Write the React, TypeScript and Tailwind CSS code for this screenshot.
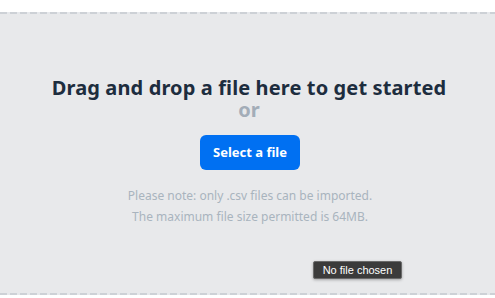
import React from 'react';

export default function App() {
  return (
    <div className="relative h-[298px] w-[495px] overflow-hidden bg-white pt-[12px] font-['Noto_Sans',sans-serif]">
      {/* top dashed line */}
      <div className="h-[2px] w-full bg-[repeating-linear-gradient(90deg,#cdd1d6_0_7px,#e6e8eb_7px_10px)]" />

      {/* drop zone */}
      <div className="flex h-[279px] flex-col items-center bg-[#e8e9eb] pl-[3px] pt-[62px]">
        <h1 className="text-[20px] font-bold leading-[24px] tracking-[0.12px] text-[#1d2d3e]">
          Drag and drop a file here to get started
        </h1>
        <div className="text-[20px] font-bold leading-[20px] text-[#a3adb8]">or</div>
        <button className="ml-[2px] mt-[15px] h-[35px] w-[100px] rounded-[6px] bg-[#0070f2] text-[13px] font-bold text-white">
          Select a file
        </button>
        <div className="ml-[2px] mt-[15px] text-center text-[12px] leading-[21px] text-[#a9b4be]">
          <p>Please note: only .csv files can be imported.</p>
          <p>The maximum file size permitted is 64MB.</p>
        </div>
      </div>

      {/* bottom dashed line */}
      <div className="h-[2px] w-full bg-[repeating-linear-gradient(90deg,#cdd1d6_0_7px,#e6e8eb_7px_10px)]" />

      {/* native tooltip */}
      <div className="absolute left-[313px] top-[261px] flex h-[18px] w-[89px] items-center justify-center rounded-[2px] border border-[#6a6a6a] bg-[#3b3b3b] font-['Liberation_Sans',sans-serif] text-[11px] text-white shadow-[0_1px_3px_rgba(0,0,0,0.3)]">
        No file chosen
      </div>
    </div>
  );
}
